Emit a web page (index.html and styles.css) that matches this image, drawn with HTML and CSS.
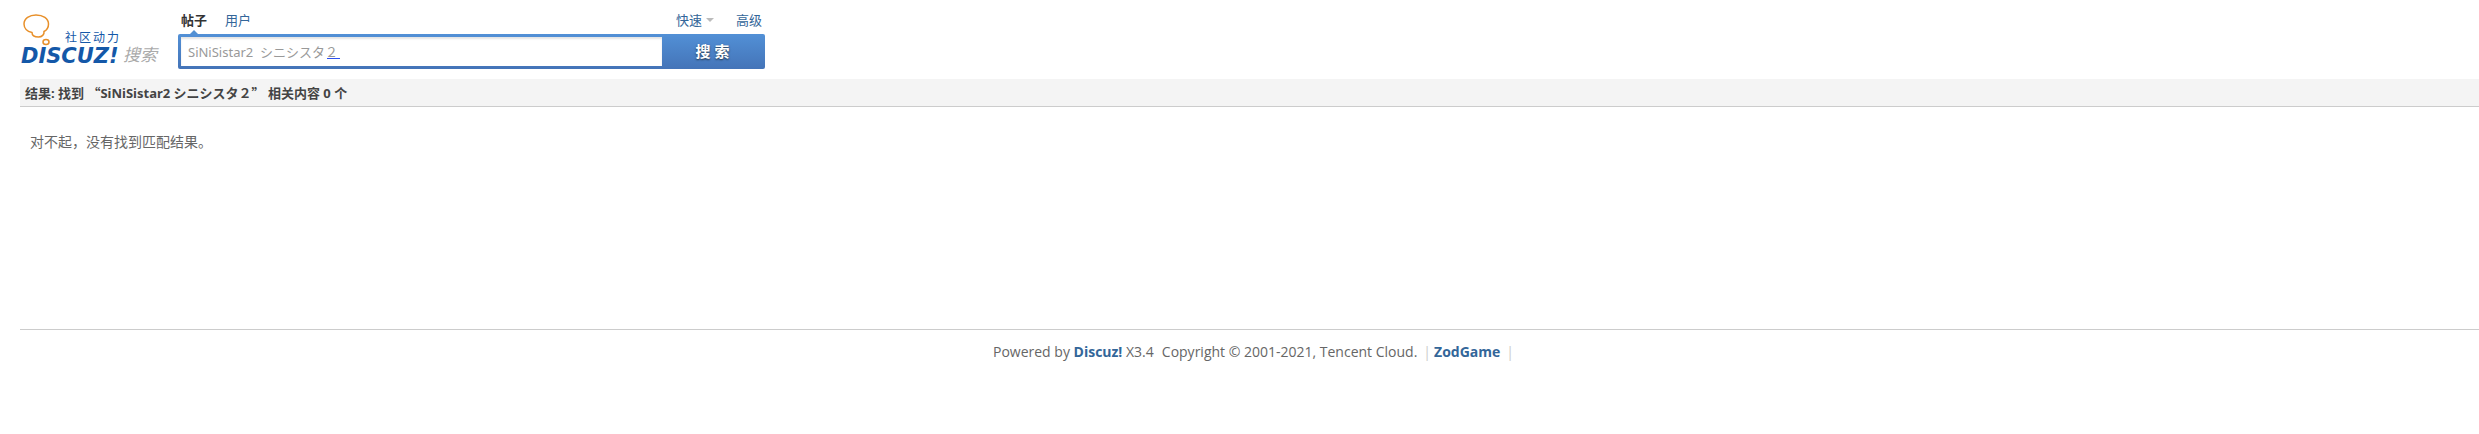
FILE: index.html
```html
<!DOCTYPE html>
<html lang="zh-CN">
<head>
<meta charset="utf-8">
<title>搜索 - Discuz!</title>
<link rel="stylesheet" href="styles.css">
</head>
<body>
<header class="header">
  <a class="logo" href="#" aria-label="Discuz! 搜索">
    <svg class="logo-art" width="140" height="55" viewBox="0 0 140 55">
      <g class="bubble">
        <path d="M12 21.500C7 20.500 4 17 4 13C4 7.500 9.500 4 16 4C23 4 28.500 7.500 28.500 13C28.500 17 27 19 24 20.500C24.500 23.500 22 26 18.500 26C14.500 26 12 24.500 12 21.500Z"/>
        <ellipse cx="26" cy="31" rx="3" ry="2.500"/>
      </g>
      <text class="logo-tag" x="45" y="31">社区动力</text>
      <text class="logo-word" x="1" y="52">DISCUZ!</text>
      <text class="logo-search" x="103" y="50">搜索</text>
    </svg>
  </a>
  <form class="search" onsubmit="return false">
    <nav class="tabs">
      <a class="tab tab-current" href="#">帖子</a>
      <a class="tab" href="#">用户</a>
      <a class="tab quick" href="#">快速</a>
      <a class="tab" href="#">高级</a>
    </nav>
    <div class="box">
      <div class="field">
        <input class="query" type="text" aria-label="搜索内容" value="SiNiSistar2&nbsp; シニシスタ２">
        <span class="underline"></span>
      </div>
      <button class="submit" type="submit">搜 索</button>
    </div>
  </form>
</header>
<main class="results">
  <h2 class="summary">结果: 找到 <span class="quote">“</span>SiNiSistar2 シニシスタ２<span class="quote">”</span> 相关内容 0 个</h2>
  <p class="empty">对不起，没有找到匹配结果。</p>
</main>
<footer class="footer">
  <span>Powered by <a class="flink" href="#">Discuz!</a> X3.4</span>
  <span class="copyright">Copyright © 2001-2021, Tencent Cloud.</span>
  <span class="pipe">|</span>
  <a class="flink" href="#">ZodGame</a>
  <span class="pipe pipe-last">|</span>
</footer>
</body>
</html>
```
FILE: styles.css
```css
* { box-sizing: border-box; }
body {
  margin: 0;
  padding-left: 20px;
  background: #fff;
  color: #666;
  font: 13px/20px "Open Sans", "Noto Sans CJK SC", sans-serif;
}
a { color: #369; text-decoration: none; }
.header { display: flex; padding-top: 11px; }
.logo { width: 158px; flex: none; }
.logo-art { display: block; overflow: visible; }
.bubble { fill: none; stroke: #e8902a; stroke-width: 1.500; }
.logo-tag { font: 12px "Noto Sans CJK SC", sans-serif; letter-spacing: 2px; fill: #1458a8; }
.logo-word { font: italic bold 21px "DejaVu Sans", sans-serif; fill: #1458a8; }
.logo-search { font: italic 17px "Noto Sans CJK SC", sans-serif; fill: #aaa; }
.search { width: 587px; }
.tabs { display: flex; height: 23px; padding: 0 3px; gap: 18px; line-height: 18px; }
.tab-current { position: relative; color: #333; font-weight: bold; }
.tab-current::after {
  content: "";
  position: absolute;
  left: 9px;
  bottom: 0;
  border: 4px solid transparent;
  border-top: 0;
  border-bottom-color: #5290d2;
}
.quick { display: flex; align-items: center; gap: 4px; height: 18px; margin-left: auto; margin-right: 4px; }
.quick::after { content: ""; border: 4px solid transparent; border-bottom: 0; border-top-color: #bbb; }
.box {
  display: flex;
  height: 35px;
  padding: 3px 0 3px 3px;
  border-radius: 2px;
  background: linear-gradient(#5290d6, #4474b8);
}
.field { position: relative; flex: 1; }
.query {
  display: block;
  width: 100%;
  height: 29px;
  padding: 0 7px;
  border: 0;
  outline: 0;
  background: #fff;
  box-shadow: inset 0 2px 2px #e4e4e4;
  color: #999;
  font: 13px "Noto Sans", "Noto Sans CJK JP", sans-serif;
}
.underline { position: absolute; left: 146px; top: 21px; width: 13px; height: 1px; background: #2b4ff0; }
.submit {
  width: 103px;
  padding: 0 2px 2px 0;
  border: 0;
  background: none;
  color: #fff;
  font: bold 15px "Open Sans", "Noto Sans CJK SC", sans-serif;
  text-shadow: 0 1px 2px #234;
}
.summary {
  margin: 10px 0 0;
  padding: 4px 5px 3px;
  border-bottom: 1px solid #ccc;
  background: #f4f4f4;
  color: #444;
  font: bold 13px/20px "Noto Sans", "Noto Sans CJK SC", sans-serif;
}
.quote { font-family: "Noto Sans CJK SC", sans-serif; }
.empty { margin: 0; padding: 25px 10px 177px; font-size: 14px; }
.footer {
  display: flex;
  justify-content: center;
  padding: 12px 0 20px 8px;
  border-top: 1px solid #ccc;
  font-size: 14px;
}
.flink { font-weight: bold; }
.copyright { margin-left: 8px; }
.pipe { margin: 0 3px 0 6px; color: #ccc; }
.pipe-last { margin-right: 0; }
```
